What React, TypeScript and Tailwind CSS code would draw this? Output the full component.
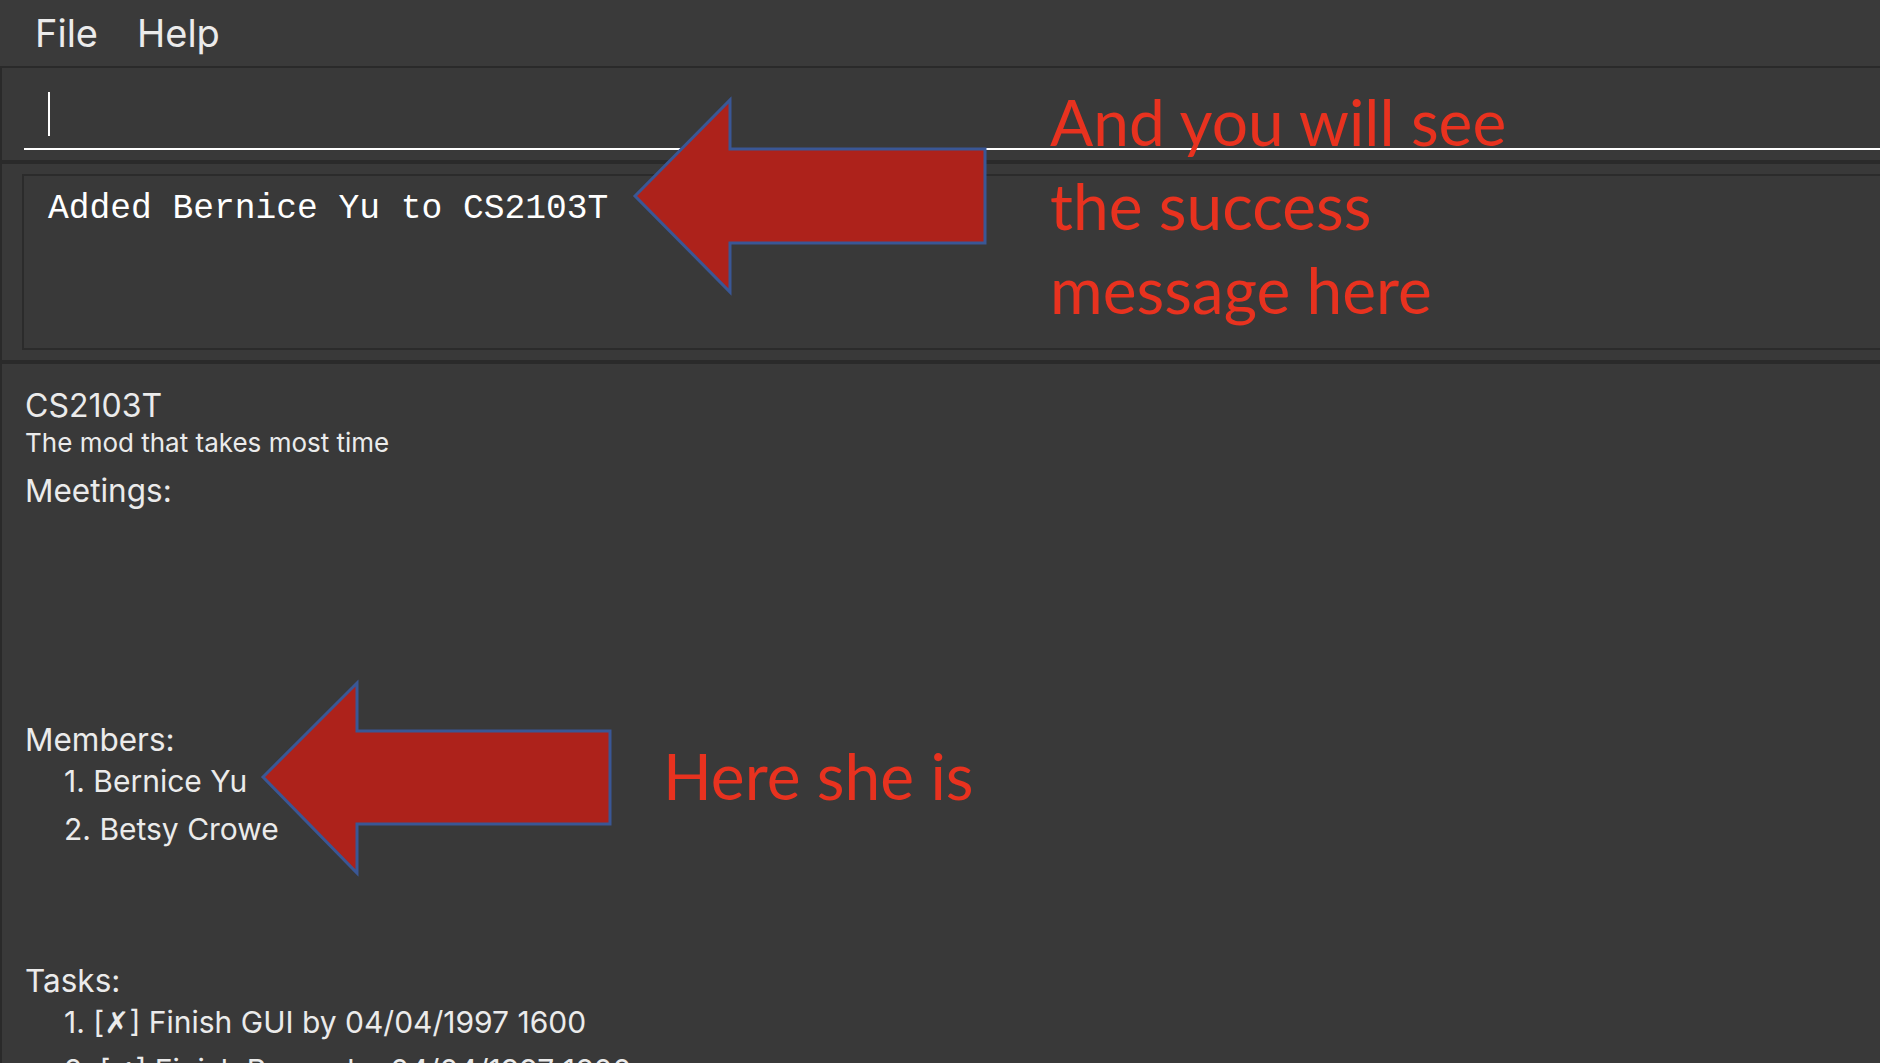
const ui = "font-['Inter','Liberation_Sans',sans-serif] text-[#ebebeb]"

function Arrow({ className, points }: { className: string; points: string }) {
  return (
    <svg className={className} xmlns="http://www.w3.org/2000/svg">
      <polygon points={points} fill="#ad221b" stroke="#3a5795" strokeWidth="3" strokeLinejoin="miter" />
    </svg>
  )
}

function Section({ title, items, className }: { title: string; items: React.ReactNode[]; className?: string }) {
  return (
    <div className={className}>
      <div className="h-[40px] text-[31.5px] leading-[40px]">{title}</div>
      <div className="mt-[1px] flex flex-col gap-[8px] pl-[39px]">
        {items.map((item, i) => (
          <div key={i} className="h-[40px] text-[30px] leading-[40px] whitespace-nowrap">
            {i + 1}. {item}
          </div>
        ))}
      </div>
    </div>
  )
}

const mark = "font-['DejaVu_Sans',sans-serif] font-bold text-[30px]"

export default function App() {
  return (
    <div className={`relative h-[1063px] w-full overflow-hidden bg-[#393939] ${ui}`}>
      {/* menu bar */}
      <div className="flex h-[68px] items-start gap-[39px] border-b-2 border-[#2a2a2a] bg-[#3a3a3a] pl-[35px]">
        <span className="text-[38px] leading-[66px]">File</span>
        <span className="text-[38px] leading-[66px]">Help</span>
      </div>

      {/* command box */}
      <div className="border-l-2 border-[#2a2a2a] pb-[10px] pl-[22px]">
        <div className="border-b-2 border-white pt-[24px] pb-[12px] pl-[24px]">
          <div className="h-[44px] w-[2px] bg-white" />
        </div>
      </div>
      <div className="h-[4px] bg-[#2a2a2a]" />

      {/* result display */}
      <div className="border-l-2 border-[#2a2a2a] py-[10px] pl-[20px]">
        <div className="h-[176px] border-y-2 border-l-2 border-[#2b2b2b] pt-[11px] pl-[24px]">
          <div className="font-['Liberation_Mono',monospace] text-[34.6px] leading-[44px] whitespace-pre text-white">
            Added Bernice Yu to CS2103T
          </div>
        </div>
      </div>
      <div className="h-[4px] bg-[#2a2a2a]" />

      {/* group details */}
      <div className="h-[699px] border-l-2 border-[#2a2a2a] pt-[22px] pl-[23px]">
        <div className="h-[40px] text-[32px] leading-[40px]">CS2103T</div>
        <div className="h-[34px] text-[26px] leading-[34px]">The mod that takes most time</div>
        <div className="mt-[11px] h-[40px] text-[31.5px] leading-[40px]">Meetings:</div>
        <Section className="mt-[209px]" title="Members:" items={['Bernice Yu', 'Betsy Crowe']} />
        <Section
          className="mt-[112px]"
          title="Tasks:"
          items={[
            <>[<span className={mark}>✗</span>] Finish GUI by 04/04/1997 1600</>,
            <>[<span className={mark}>✓</span>] Finish Parser by 04/04/1997 1600</>,
          ]}
        />
      </div>

      {/* annotations */}
      <Arrow
        className="absolute left-[630px] top-[95px] h-[202px] w-[360px]"
        points="5,101 100,5 100,54 355,54 355,148 100,148 100,197"
      />
      <Arrow
        className="absolute left-[258px] top-[678px] h-[200px] w-[357px]"
        points="5,99 99,5 99,53 352,53 352,146 99,146 99,195"
      />
      <div className="absolute left-[1050px] top-[80px] font-['Lato',sans-serif] text-[64px] leading-[84px] text-[#e8321f] whitespace-nowrap">
        <div>And you will see</div>
        <div>the success</div>
        <div>message here</div>
      </div>
      <div className="absolute left-[663px] top-[734px] font-['Lato',sans-serif] text-[64px] leading-[84px] text-[#e8321f] whitespace-nowrap">
        Here she is
      </div>
    </div>
  )
}
